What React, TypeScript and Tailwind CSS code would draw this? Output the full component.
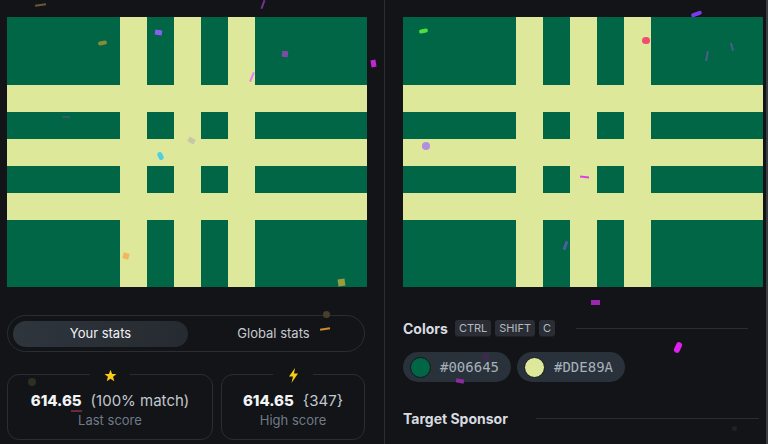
import { ReactNode } from 'react'

const GREEN = '#006645'
const YELLOW = '#DDE89A'

// pattern drawn on both canvases
function Pattern() {
  const cols = [113, 167, 221]
  const rows = [68, 122, 176]
  return (
    <svg width="360" height="270" viewBox="0 0 360 270" className="block">
      <rect width="360" height="270" fill={GREEN} />
      {rows.map((y) => (
        <rect key={'r' + y} x="0" y={y} width="360" height="27" fill={YELLOW} />
      ))}
      {cols.map((x) => (
        <rect key={'c' + x} x={x} y="0" width="27" height="270" fill={YELLOW} />
      ))}
    </svg>
  )
}

function StatCard({ icon, value, extra, label, className }: { icon: ReactNode; value: string; extra: string; label: string; className: string }) {
  return (
    <div className={'relative h-[66px] rounded-[12px] border border-[#2a2e33] ' + className}>
      <div className="absolute left-1/2 top-[-8px] flex h-[16px] w-[40px] -translate-x-1/2 items-center justify-center bg-[#121417]">
        {icon}
      </div>
      <div className="flex h-full flex-col items-center justify-center pt-[5px]">
        <div className="flex items-baseline gap-[9px] text-[15px] leading-[20px]">
          <span className="font-extrabold text-[#f3f4f6]">{value}</span>
          <span className="text-[#c3c8d0]">{extra}</span>
        </div>
        <div className="text-[13px] leading-[18px] text-[#6f7a89]">{label}</div>
      </div>
    </div>
  )
}

function Kbd({ children }: { children: ReactNode }) {
  return (
    <span className="flex h-[16px] items-center rounded-[3px] bg-[#2a2e34] px-[4px] text-[11px] leading-none text-[#b4b9c1] shadow-[0_1px_0_#1c1f23]">
      {children}
    </span>
  )
}

function ColorChip({ color, hex }: { color: string; hex: string }) {
  return (
    <div className="flex h-[30px] items-center gap-[9px] rounded-full bg-[#29313a] pl-[7px] pr-[12px]">
      <span className="h-[21px] w-[21px] rounded-full border border-[#14171a]" style={{ backgroundColor: color }} />
      <span className="font-['DejaVu_Sans_Mono',monospace] text-[14px] text-[#a7b1bd]">{hex}</span>
    </div>
  )
}

const confetti: { x: number; y: number; w: number; h: number; c: string; r: number; round?: boolean }[] = [
  { x: 35, y: 4, w: 11, h: 1.5, c: '#6b5a2e', r: -8 },
  { x: 262, y: 0, w: 2, h: 9, c: '#7b2d9a', r: 20 },
  { x: 155, y: 30, w: 7, h: 5, c: '#8b5cf6', r: 8 },
  { x: 98, y: 41, w: 9, h: 4, c: '#8a8a3a', r: -10, round: true },
  { x: 282, y: 51, w: 6, h: 6, c: '#7c4da3', r: 5 },
  { x: 371, y: 60, w: 5, h: 7, c: '#c026d3', r: -10 },
  { x: 251, y: 72, w: 1.5, h: 10, c: '#e879f9', r: 22 },
  { x: 62, y: 116, w: 8, h: 1.5, c: '#2f5e6a', r: 5 },
  { x: 188, y: 138, w: 7, h: 5, c: '#c9c6a8', r: 30 },
  { x: 158, y: 152, w: 5, h: 8, c: '#4dd0e1', r: -25, round: true },
  { x: 123, y: 253, w: 6, h: 6, c: '#f0b85a', r: 15 },
  { x: 338, y: 279, w: 7, h: 7, c: '#9a9a40', r: -8 },
  { x: 691, y: 12, w: 11, h: 4, c: '#7c3aed', r: -20, round: true },
  { x: 419, y: 29, w: 9, h: 4, c: '#4ade40', r: -12, round: true },
  { x: 642, y: 37, w: 8, h: 7, c: '#f0506e', r: 0, round: true },
  { x: 706, y: 51, w: 1.5, h: 10, c: '#4b5f8a', r: 10 },
  { x: 731, y: 43, w: 1.5, h: 8, c: '#4b5f8a', r: -15 },
  { x: 422, y: 142, w: 8, h: 8, c: '#b48ce0', r: 0, round: true },
  { x: 580, y: 176, w: 9, h: 2, c: '#e040e0', r: 5 },
  { x: 564, y: 241, w: 3, h: 9, c: '#4a5fa0', r: 20 },
  { x: 323, y: 311, w: 7, h: 7, c: '#4a3e2a', r: 0, round: true },
  { x: 320, y: 328, w: 10, h: 1.5, c: '#d08a2a', r: -8 },
  { x: 28, y: 378, w: 8, h: 8, c: '#2d3020', r: 0, round: true },
  { x: 71, y: 410, w: 11, h: 1.5, c: '#6b2a3a', r: 0 },
  { x: 591, y: 300, w: 9, h: 5, c: '#9b27b0', r: 0 },
  { x: 675, y: 342, w: 6, h: 11, c: '#e020f0', r: 25, round: true },
  { x: 482, y: 353, w: 8, h: 8, c: '#3c2a4a', r: 0, round: true },
  { x: 456, y: 379, w: 8, h: 4, c: '#8e2aa0', r: 10 },
  { x: 732, y: 426, w: 5, h: 5, c: '#1e2226', r: 0, round: true },
]

export default function App() {
  return (
    <div className="relative flex h-[444px] w-[768px] overflow-hidden bg-[#121417] font-['Inter',sans-serif]">
      {/* left panel */}
      <div className="w-[384px] shrink-0 pl-[7px] pt-[17px]">
        <Pattern />
        <div className="mt-[28px] flex h-[37px] w-[358px] items-center rounded-full border border-[#2a2e33] p-[5px]">
          <div className="flex h-[26px] w-[175px] items-center justify-center rounded-full bg-gradient-to-r from-[#2f353d] to-[#262b31] text-[13px] text-[#f0f1f3]">
            Your stats
          </div>
          <div className="flex flex-1 items-center justify-center text-[13px] text-[#c6cad1]">Global stats</div>
        </div>
        <div className="mt-[22px] flex gap-[8px]">
          <StatCard
            className="w-[206px]"
            value="614.65"
            extra="(100% match)"
            label="Last score"
            icon={
              <svg width="13" height="13" viewBox="0 0 24 24">
                <polygon points="12,1.5 15,9 23,9.3 16.8,14.3 19,22.5 12,17.8 5,22.5 7.2,14.3 1,9.3 9,9" fill="#facc15" />
              </svg>
            }
          />
          <StatCard
            className="w-[144px]"
            value="614.65"
            extra="{347}"
            label="High score"
            icon={
              <svg width="11" height="15" viewBox="0 0 11 15">
                <polygon points="7,0 1,8.5 5,8.5 3.5,15 10,5.5 6,5.5" fill="#facc15" />
              </svg>
            }
          />
        </div>
      </div>

      <div className="w-px shrink-0 bg-[#2a2e33]" />

      {/* right panel */}
      <div className="w-[381px] shrink-0 pl-[18px] pt-[17px]">
        <Pattern />
        <div className="mt-[33px] flex h-[16px] items-center">
          <span className="text-[14px] font-bold text-[#d8dbe0]">Colors</span>
          <div className="ml-[7px] flex gap-[4px]">
            <Kbd>CTRL</Kbd>
            <Kbd>SHIFT</Kbd>
            <Kbd>C</Kbd>
          </div>
          <div className="ml-[21px] h-px w-[172px] bg-[#2a2e33]" />
        </div>
        <div className="mt-[16px] flex gap-[6px]">
          <ColorChip color={GREEN} hex="#006645" />
          <ColorChip color={YELLOW} hex="#DDE89A" />
        </div>
        <div className="mt-[26px] flex items-center">
          <span className="text-[14px] font-bold text-[#d8dbe0]">Target Sponsor</span>
          <div className="ml-[28px] h-px w-[223px] bg-[#2a2e33]" />
        </div>
      </div>

      <div className="ml-auto w-[2px] shrink-0 bg-[#3a3d41]" />

      {confetti.map((p, i) => (
        <span
          key={i}
          className={'pointer-events-none absolute ' + (p.round ? 'rounded-full' : '')}
          style={{ left: p.x, top: p.y, width: p.w, height: p.h, backgroundColor: p.c, transform: `rotate(${p.r}deg)` }}
        />
      ))}
    </div>
  )
}
